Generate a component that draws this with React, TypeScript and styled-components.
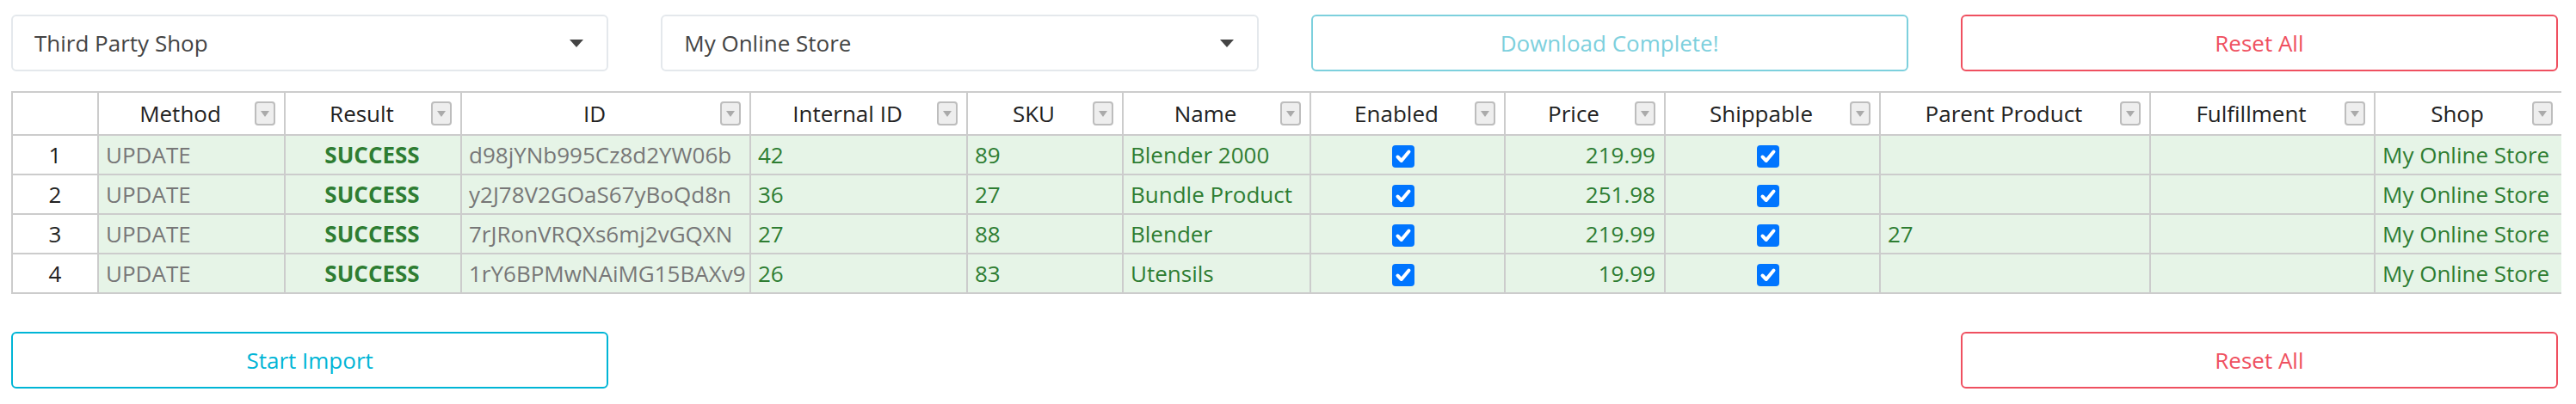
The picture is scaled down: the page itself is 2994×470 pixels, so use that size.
import React from "react";
import styled, { createGlobalStyle } from "styled-components";

const GlobalStyle = createGlobalStyle`
  body {
    margin: 0;
    background: #fff;
    font-family: "Open Sans", "Noto Sans", sans-serif;
  }
`;

type Align = "left" | "center" | "right";
type Tone = "info" | "muted" | "danger";

const columns: { title: string; width: number }[] = [
  { title: "Method", width: 217 },
  { title: "Result", width: 205 },
  { title: "ID", width: 336 },
  { title: "Internal ID", width: 252 },
  { title: "SKU", width: 181 },
  { title: "Name", width: 218 },
  { title: "Enabled", width: 226 },
  { title: "Price", width: 186 },
  { title: "Shippable", width: 250 },
  { title: "Parent Product", width: 314 },
  { title: "Fulfillment", width: 261 },
  { title: "Shop", width: 218 },
];

const rows = [
  { id: "d98jYNb995Cz8d2YW06b", internal: "42", sku: "89", name: "Blender 2000", price: "219.99", parent: "" },
  { id: "y2J78V2GOaS67yBoQd8n", internal: "36", sku: "27", name: "Bundle Product", price: "251.98", parent: "" },
  { id: "7rJRonVRQXs6mj2vGQXN", internal: "27", sku: "88", name: "Blender", price: "219.99", parent: "27" },
  { id: "1rY6BPMwNAiMG15BAXv9", internal: "26", sku: "83", name: "Utensils", price: "19.99", parent: "" },
];

const App = () => {
  return (
    <Page>
      <GlobalStyle />
      <Toolbar>
        <SelectBox>
          <span>Third Party Shop</span>
          <Caret />
        </SelectBox>
        <SelectBox>
          <span>My Online Store</span>
          <Caret />
        </SelectBox>
        <OutlineButton $tone="muted">Download Complete!</OutlineButton>
        <OutlineButton $tone="danger">Reset All</OutlineButton>
      </Toolbar>

      <TableWrap>
        <Grid>
          <colgroup>
            <col style={{ width: 100 }} />
            {columns.map((c) => (
              <col key={c.title} style={{ width: c.width }} />
            ))}
          </colgroup>
          <thead>
            <tr>
              <HeadCell />
              {columns.map((c) => (
                <HeadCell key={c.title}>
                  <HeadInner>
                    <HeadLabel>{c.title}</HeadLabel>
                    <FilterButton>
                      <svg width="10" height="7" viewBox="0 0 10 7">
                        <path d="M0 0 L10 0 L5 7 Z" fill="#aaa" />
                      </svg>
                    </FilterButton>
                  </HeadInner>
                </HeadCell>
              ))}
            </tr>
          </thead>
          <tbody>
            {rows.map((r, i) => (
              <tr key={r.id}>
                <RowNumber>{i + 1}</RowNumber>
                <Cell $muted>UPDATE</Cell>
                <Cell $align="center" $bold>
                  SUCCESS
                </Cell>
                <Cell $muted>{r.id}</Cell>
                <Cell>{r.internal}</Cell>
                <Cell>{r.sku}</Cell>
                <Cell>{r.name}</Cell>
                <Cell $align="center">
                  <Check />
                </Cell>
                <Cell $align="right">{r.price}</Cell>
                <Cell $align="center">
                  <Check />
                </Cell>
                <Cell>{r.parent}</Cell>
                <Cell />
                <Cell>My Online Store</Cell>
              </tr>
            ))}
          </tbody>
        </Grid>
      </TableWrap>

      <Footer>
        <OutlineButton $tone="info">Start Import</OutlineButton>
        <span />
        <span />
        <OutlineButton $tone="danger">Reset All</OutlineButton>
      </Footer>
    </Page>
  );
};

const Caret = () => (
  <svg width="16" height="9" viewBox="0 0 16 9">
    <path d="M0 0 L16 0 L8 9 Z" fill="#444" />
  </svg>
);

const Check = () => (
  <CheckBox>
    <svg width="26" height="26" viewBox="0 0 26 26">
      <path
        d="M6.5 13.5 L10.8 18 L19.5 7.5"
        fill="none"
        stroke="#fff"
        strokeWidth="4"
        strokeLinecap="round"
        strokeLinejoin="round"
      />
    </svg>
  </CheckBox>
);

export default App;

const toneColors: Record<Tone, string> = {
  info: "#00b5d6",
  muted: "#7dd0dd",
  danger: "#ef5060",
};

const Page = styled.div`
  padding: 17px 21px 20px 13px;
`;

const Toolbar = styled.div`
  display: grid;
  grid-template-columns: repeat(4, 1fr);
  column-gap: 61px;
`;

const Footer = styled(Toolbar)`
  margin-top: 44px;
`;

const SelectBox = styled.div`
  height: 66px;
  box-sizing: border-box;
  border: 2px solid #e4e8ec;
  border-radius: 6px;
  background: #fff;
  display: flex;
  align-items: center;
  justify-content: space-between;
  padding: 0 27px 0 25px;
  font-size: 26px;
  color: #444;
`;

const OutlineButton = styled.button<{ $tone: Tone }>`
  height: 66px;
  box-sizing: border-box;
  border: 2px solid ${(p) => toneColors[p.$tone]};
  border-radius: 6px;
  background: #fff;
  color: ${(p) => toneColors[p.$tone]};
  font-family: "Open Sans", "Noto Sans", sans-serif;
  font-size: 26px;
  cursor: pointer;
`;

const TableWrap = styled.div`
  margin-top: 23px;
  margin-right: -4px;
  overflow: hidden;
`;

const Grid = styled.table`
  table-layout: fixed;
  border-collapse: collapse;
  width: 2964px;
  font-size: 26px;
`;

const HeadCell = styled.th`
  height: 48px;
  padding: 0;
  border: 2px solid #ccc;
  background: #fff;
  color: #222;
  font-weight: 400;
`;

const HeadInner = styled.div`
  display: flex;
  align-items: center;
  padding: 0 10px 0 8px;
`;

const HeadLabel = styled.span`
  flex: 1;
  text-align: center;
  white-space: nowrap;
  overflow: hidden;
`;

const FilterButton = styled.span`
  width: 24px;
  height: 28px;
  box-sizing: border-box;
  border: 2px solid #bdbdbd;
  border-radius: 4px;
  background: #eee;
  display: flex;
  align-items: center;
  justify-content: center;
  flex-shrink: 0;
`;

const RowNumber = styled.td`
  height: 44px;
  padding: 0;
  border: 2px solid #ccc;
  background: #fff;
  color: #222;
  text-align: center;
`;

const Cell = styled.td<{ $align?: Align; $muted?: boolean; $bold?: boolean }>`
  height: 44px;
  padding: 0 10px 0 8px;
  border: 2px solid #ccc;
  background: #e6f4e7;
  color: ${(p) => (p.$muted ? "#777" : "#2e7d32")};
  font-weight: ${(p) => (p.$bold ? 700 : 400)};
  text-align: ${(p) => p.$align ?? "left"};
  white-space: nowrap;
  overflow: hidden;
  line-height: 1;
`;

const CheckBox = styled.span`
  display: inline-flex;
  width: 26px;
  height: 26px;
  margin-right: 8px;
  border-radius: 4px;
  background: #0075ff;
  vertical-align: middle;
`;
